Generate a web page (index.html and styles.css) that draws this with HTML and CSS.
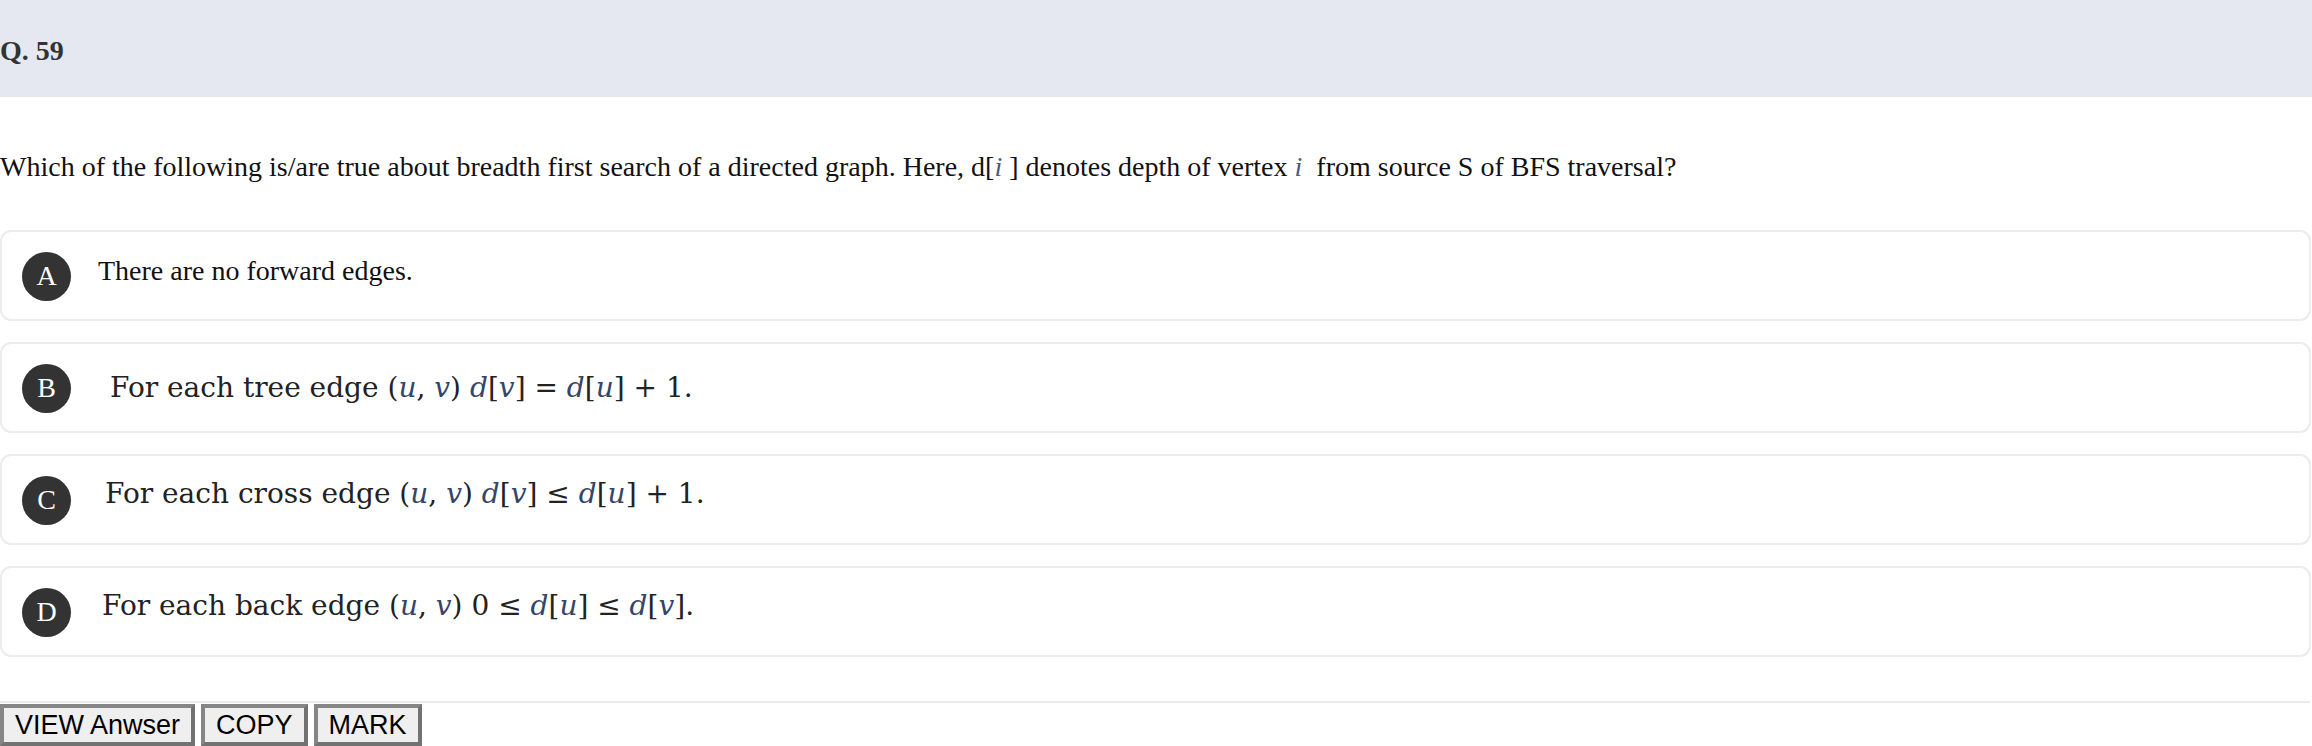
FILE: index.html
```html
<!DOCTYPE html>
<html lang="en">
<head>
<meta charset="utf-8">
<title>Q. 59</title>
<link rel="stylesheet" href="styles.css">
</head>
<body>
<div class="qhead"><h2 class="qno">Q. 59</h2></div>
<p class="question">Which of the following is/are true about breadth first search of a directed graph. Here, d[<i class="mi">i</i> ] denotes depth of vertex <i class="mi">i</i>&nbsp; from source S of BFS traversal?</p>
<div class="options">
  <div class="option">
    <span class="badge">A</span>
    <span class="opt-text">There are no forward edges.</span>
  </div>
  <div class="option">
    <span class="badge">B</span>
    <span class="opt-img opt-b">For each tree edge (<i>u</i>, <i>v</i>) <i>d</i>[<i>v</i>] = <i>d</i>[<i>u</i>] + 1.</span>
  </div>
  <div class="option">
    <span class="badge">C</span>
    <span class="opt-img opt-c">For each cross edge (<i>u</i>, <i>v</i>) <i>d</i>[<i>v</i>] ≤ <i>d</i>[<i>u</i>] + 1.</span>
  </div>
  <div class="option">
    <span class="badge">D</span>
    <span class="opt-img opt-d">For each back edge (<i>u</i>, <i>v</i>) 0 ≤ <i>d</i>[<i>u</i>] ≤ <i>d</i>[<i>v</i>].</span>
  </div>
</div>
<div class="sep"></div>
<div class="actions">
  <button class="btn">VIEW Anwser</button>
  <button class="btn">COPY</button>
  <button class="btn">MARK</button>
</div>
</body>
</html>
```
FILE: styles.css
```css
html, body {
  margin: 0;
  padding: 0;
  background: #ffffff;
}
body {
  font-family: "Liberation Serif", "Times New Roman", serif;
  color: #111;
}
.qhead {
  height: 97px;
  background: #e5e8f0;
  display: flex;
  align-items: center;
}
.qno {
  margin: 4px 0 0 0;
  font-size: 28px;
  font-weight: bold;
  color: #333;
}
.question {
  margin: 0;
  padding: 50px 0 0 0;
  height: 133px;
  box-sizing: border-box;
  font-size: 28px;
  line-height: 40px;
  color: #111;
}
.mi {
  color: #4a5a80;
  font-family: "Liberation Serif", serif;
}
.options {
  display: flex;
  flex-direction: column;
  gap: 21px;
  margin-right: 1px;
}
.option {
  height: 91px;
  box-sizing: border-box;
  border: 2px solid #ececec;
  border-radius: 11px;
  display: flex;
  align-items: center;
  padding-left: 20px;
  gap: 27px;
}
.badge {
  width: 49px;
  height: 49px;
  border-radius: 50%;
  background: #333333;
  color: #fff;
  font-size: 28px;
  display: flex;
  align-items: center;
  justify-content: center;
  flex: none;
  margin-top: 1px;
}
.opt-text {
  font-size: 28px;
  margin-top: -10px;
}
.opt-img {
  font-family: "DejaVu Serif", serif;
  font-size: 28px;
  color: #222;
}
.opt-img i {
  color: #34456a;
}
.opt-b { padding-left: 12px; }
.opt-c { padding-left: 7px; margin-top: -12px; }
.opt-d { padding-left: 4px; margin-top: -12px; }
.sep {
  margin-top: 44px;
  height: 2px;
  background: #ebebeb;
  margin-right: 2px;
}
.actions {
  display: flex;
  gap: 6px;
  margin-top: 1px;
}
.btn {
  font-family: "Liberation Sans", Arial, sans-serif;
  font-size: 27px;
  color: #000;
  background: #efefef;
  border-width: 4px;
  border-style: solid;
  border-color: #868686 #727272 #727272 #868686;
  padding: 1px 11px;
  line-height: 32px;
  margin: 0;
}
```
